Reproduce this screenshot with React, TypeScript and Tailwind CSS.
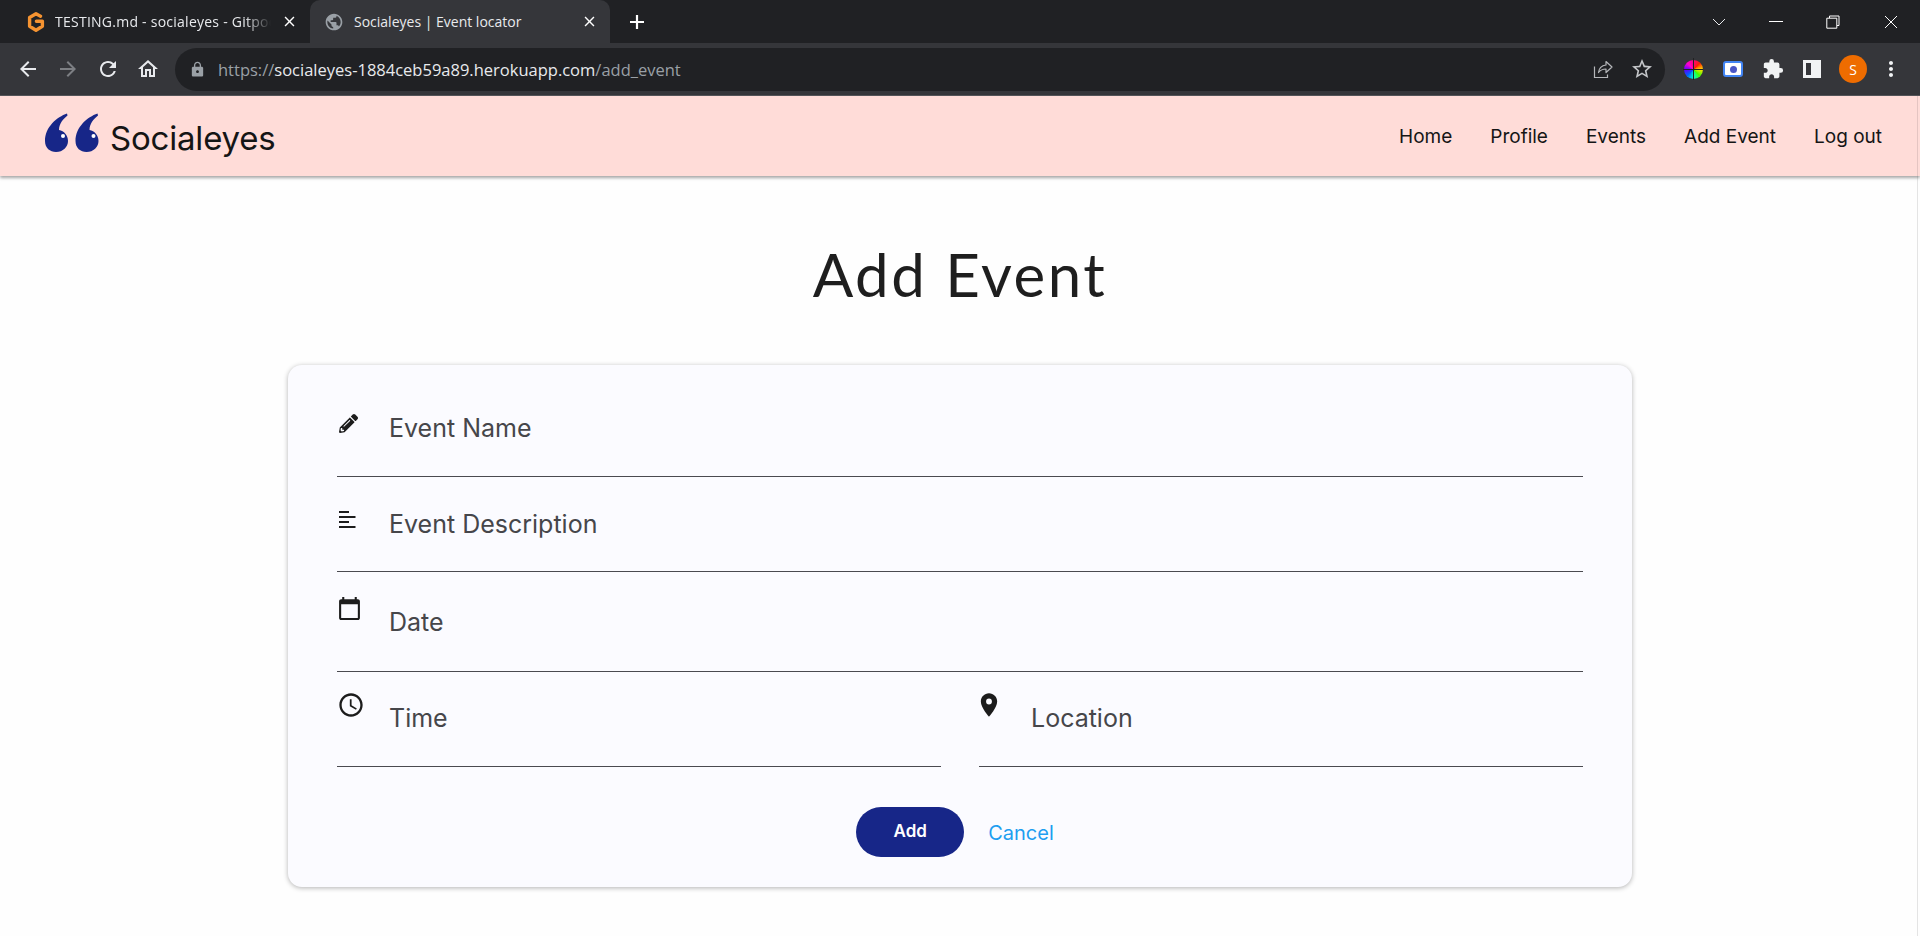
import type { ReactNode } from "react";
import {
  MdAccessTime,
  MdArrowBack,
  MdArrowForward,
  MdCalendarToday,
  MdClose,
  MdExtension,
  MdLocationOn,
  MdLock,
  MdMoreVert,
  MdOutlineHome,
  MdPublic,
  MdRefresh,
  MdStarBorder,
} from "react-icons/md";
import { FaPencilAlt } from "react-icons/fa";

const navLinks = ["Home", "Profile", "Events", "Add Event", "Log out"];

function GitpodLogo() {
  return (
    <svg viewBox="0 0 20 20" className="w-[20px] h-[20px] shrink-0" fill="none">
      <path
        d="M14.5 4.2 10 1.8 3.6 5.4v8.800l6.400 4 6.400-4V9.200h-6"
        stroke="#f59331"
        strokeWidth="3.400"
        strokeLinejoin="round"
        strokeLinecap="round"
      />
    </svg>
  );
}

function TabStrip() {
  return (
    <div className="h-[43px] bg-[#202124] flex items-end shrink-0 text-[14px] font-['Open_Sans',sans-serif]">
      <div className="w-[310px] h-[43px] flex items-center pl-[26px] pr-[12px]">
        <GitpodLogo />
        <span className="ml-[9px] w-[216px] whitespace-nowrap overflow-hidden tracking-[0.25px] text-[#e8eaed] [mask-image:linear-gradient(to_right,black_88%,transparent)]">
          TESTING.md - socialeyes - Gitpod
        </span>
        <MdClose className="ml-auto text-white" size={17} />
      </div>
      <div className="w-[300px] h-[43px] bg-[#35363a] rounded-t-[10px] flex items-center pl-[14px] pr-[12px]">
        <MdPublic className="text-[#9aa0a6]" size={20} />
        <span className="ml-[10px] text-[#e8eaed] whitespace-nowrap">Socialeyes | Event locator</span>
        <MdClose className="ml-auto text-white" size={17} />
      </div>
      <div className="h-[43px] flex items-center ml-[19px]">
        <svg viewBox="0 0 16 16" className="w-[16px] h-[16px]">
          <path d="M8 1v14M1 8h14" stroke="#fff" strokeWidth="2.200" />
        </svg>
      </div>
      <div className="ml-auto h-[43px] flex items-center pr-[22px]">
        <svg viewBox="0 0 14 8" className="w-[14px] h-[8px] mr-[43px]" fill="none">
          <path d="M1 1l6 6 6-6" stroke="#e8eaed" strokeWidth="1" />
        </svg>
        <div className="w-[14px] h-px bg-white mr-[43px]" />
        <svg viewBox="0 0 14 14" className="w-[14px] h-[14px] mr-[44px]" fill="none">
          <path d="M3.500 3V1h9.500v9.500h-2M.8 3.200h10v10h-10z" stroke="#fff" strokeWidth="1" />
        </svg>
        <svg viewBox="0 0 14 14" className="w-[14px] h-[14px]" fill="none">
          <path d="M1 1l12 12M13 1 1 13" stroke="#fff" strokeWidth="1" />
        </svg>
      </div>
    </div>
  );
}

function ColorWheel() {
  return (
    <div className="relative w-[20px] h-[24px] flex items-center justify-center">
      <div className="w-[19px] h-[19px] rounded-full bg-[conic-gradient(#ff0080,#ff2000,#ffe000,#40ff00,#00ffd0,#0060ff,#6000ff,#ff00d0,#ff0080)]" />
      <div className="absolute left-0 right-0 top-[11.500px] h-px bg-[#222]" />
      <div className="absolute top-[1px] bottom-[1px] left-[9.500px] w-px bg-[#222]" />
    </div>
  );
}

function ShareIcon() {
  return (
    <svg viewBox="0 0 20 20" className="ml-auto w-[20px] h-[20px]" fill="none" stroke="#b5b7ba" strokeWidth="1.200">
      <path d="M1.500 7.500v11h13v-3" />
      <path d="M5.500 13.500c.5-4.500 3.500-7 7.500-7.500V2.500l6 5.500-6 5.500V10c-3 0-5.500 1-7.500 3.500Z" strokeLinejoin="round" />
    </svg>
  );
}

function Toolbar() {
  return (
    <div className="h-[53px] bg-[#35363a] border-b border-[#55565a] flex items-center shrink-0 pl-[16px] pr-[16px] font-['Open_Sans',sans-serif]">
      <MdArrowBack className="text-[#e8eaed]" size={24} />
      <MdArrowForward className="text-[#7d7f83] ml-[16px]" size={24} />
      <MdRefresh className="text-[#e8eaed] ml-[16px]" size={24} />
      <MdOutlineHome className="text-[#e8eaed] ml-[16px]" size={24} />
      <div className="ml-[15px] w-[1490px] h-[43px] rounded-full bg-[#202124] flex items-center pl-[14px] pr-[11px]">
        <MdLock className="text-[#9aa0a6]" size={17} />
        <span className="ml-[12px] mt-[2px] text-[16.500px] text-[#9aa0a6] whitespace-nowrap">
          https://<span className="text-[#e8eaed]">socialeyes-1884ceb59a89.herokuapp.com</span>/add_event
        </span>
        <ShareIcon />
        <MdStarBorder className="ml-[17px] text-[#c4c6c9]" size={24} />
      </div>
      <div className="ml-[18px]">
        <ColorWheel />
      </div>
      <div className="ml-[20px] w-[20px] h-[16px] rounded-[3px] bg-white border-2 border-[#4285f4] flex items-center justify-center">
        <div className="w-[7px] h-[7px] rounded-full bg-[#4a56c6]" />
      </div>
      <MdExtension className="ml-[19px] text-[#f1f3f4]" size={22} />
      <div className="ml-[19px] w-[18px] h-[18px] border-[3px] border-[#f1f3f4] flex justify-end">
        <div className="w-[7px] h-full bg-[#f1f3f4]" />
      </div>
      <div className="ml-[18px] w-[28px] h-[28px] rounded-full bg-[#ee6c00] text-white text-[14px] flex items-center justify-center">
        S
      </div>
      <MdMoreVert className="ml-[12px] text-[#f1f3f4]" size={24} />
    </div>
  );
}

function QuoteLogo() {
  return (
    <svg viewBox="0 0 54 40" className="w-[54px] h-[40px] shrink-0 mb-[7px]">
      <path d="M22 0.500C12 4 0 14 0 28c0 7 5 11 11 11 7 0 12-5 12-11 0-6-4-10-9-11 0-6 4-11 8.500-14.500Z" fill="#172688" />
      <path d="M52.500 0.500C42.500 4 30.500 14 30.500 28c0 7 5 11 11 11 7 0 12-5 12-11 0-6-4-10-9-11 0-6 4-11 8.500-14.500Z" fill="#172688" />
      <circle cx="18" cy="23" r="2" fill="#fff" />
      <circle cx="48.500" cy="23" r="2" fill="#fff" />
    </svg>
  );
}

function SiteNav() {
  return (
    <nav className="h-[80px] bg-[#ffdcd8] shadow-[0_2px_3px_rgba(0,0,0,0.35)] flex items-center justify-between pl-[45px] pr-[38px] shrink-0 relative font-['Inter',sans-serif]">
      <div className="flex items-center">
        <QuoteLogo />
        <span className="ml-[11px] mt-[6px] text-[33px] text-[#151515] tracking-[-0.2px]">Socialeyes</span>
      </div>
      <ul className="flex items-center gap-[38px] mt-[2px] text-[19px] text-[#151515]">
        {navLinks.map((link) => (
          <li key={link}>{link}</li>
        ))}
      </ul>
    </nav>
  );
}

function AlignIcon() {
  return (
    <svg viewBox="0 0 18 18" className="w-[18px] h-[18px]" fill="none" stroke="#1c1c1c" strokeWidth="1.800">
      <path d="M0 1h10M0 6h16.500M0 11h10M0 16h16.500" />
    </svg>
  );
}

type FieldProps = {
  icon: ReactNode;
  label: string;
  iconTop: string;
  labelTop: string;
  height: string;
};

function Field({ icon, label, iconTop, labelTop, height }: FieldProps) {
  return (
    <div className={`flex-1 flex border-b border-[#4a4a50] ${height}`}>
      <div className={`w-[52px] shrink-0 text-[#1c1c1c] ${iconTop}`}>{icon}</div>
      <div className={`text-[25px] leading-[32px] text-[#46464a] ${labelTop}`}>{label}</div>
    </div>
  );
}

function AddEventForm() {
  return (
    <div className="w-[1344px] mx-auto mt-[39px] h-[522px] rounded-[14px] bg-[#fbfbff] shadow-[0_1px_5px_rgba(0,0,0,0.3)] pt-[17px] px-[49px] font-['Inter',sans-serif]">
      <div className="flex">
        <Field
          height="h-[95px]"
          iconTop="pt-[32px] pl-[2px]"
          labelTop="pt-[30px]"
          label="Event Name"
          icon={<FaPencilAlt size={19} />}
        />
      </div>
      <div className="flex">
        <Field height="h-[95px]" iconTop="pt-[34px] pl-[2px]" labelTop="pt-[31px]" label="Event Description" icon={<AlignIcon />} />
      </div>
      <div className="flex">
        <Field
          height="h-[100px]"
          iconTop="pt-[24px]"
          labelTop="pt-[34px]"
          label="Date"
          icon={<MdCalendarToday size={25} />}
        />
      </div>
      <div className="flex gap-[38px]">
        <Field height="h-[95px]" iconTop="pt-[19px]" labelTop="pt-[30px]" label="Time" icon={<MdAccessTime size={28} />} />
        <Field
          height="h-[95px]"
          iconTop="pt-[19px] -ml-[4px] mr-[4px]"
          labelTop="pt-[30px]"
          label="Location"
          icon={<MdLocationOn size={28} />}
        />
      </div>
      <div className="flex justify-center items-center mt-[40px] pr-[10px]">
        <button className="w-[108px] h-[50px] rounded-full bg-[#172688] text-white text-[17px] font-semibold">Add</button>
        <a className="ml-[24px] mt-[1px] text-[20px] text-[#1e9ef0]">Cancel</a>
      </div>
    </div>
  );
}

export default function App() {
  return (
    <div className="relative h-[936px] w-full overflow-hidden flex flex-col bg-[#fefefe]">
      <TabStrip />
      <Toolbar />
      <SiteNav />
      <main className="flex-1">
        <h1 className="mt-[55px] h-[95px] text-center text-[60px] leading-[86px] tracking-[2.500px] font-normal text-[#1e1e1e] font-['Lato',sans-serif]">
          Add Event
        </h1>
        <AddEventForm />
      </main>
      <div className="absolute top-[96px] bottom-0 right-[2px] w-px bg-black/10" />
    </div>
  );
}
